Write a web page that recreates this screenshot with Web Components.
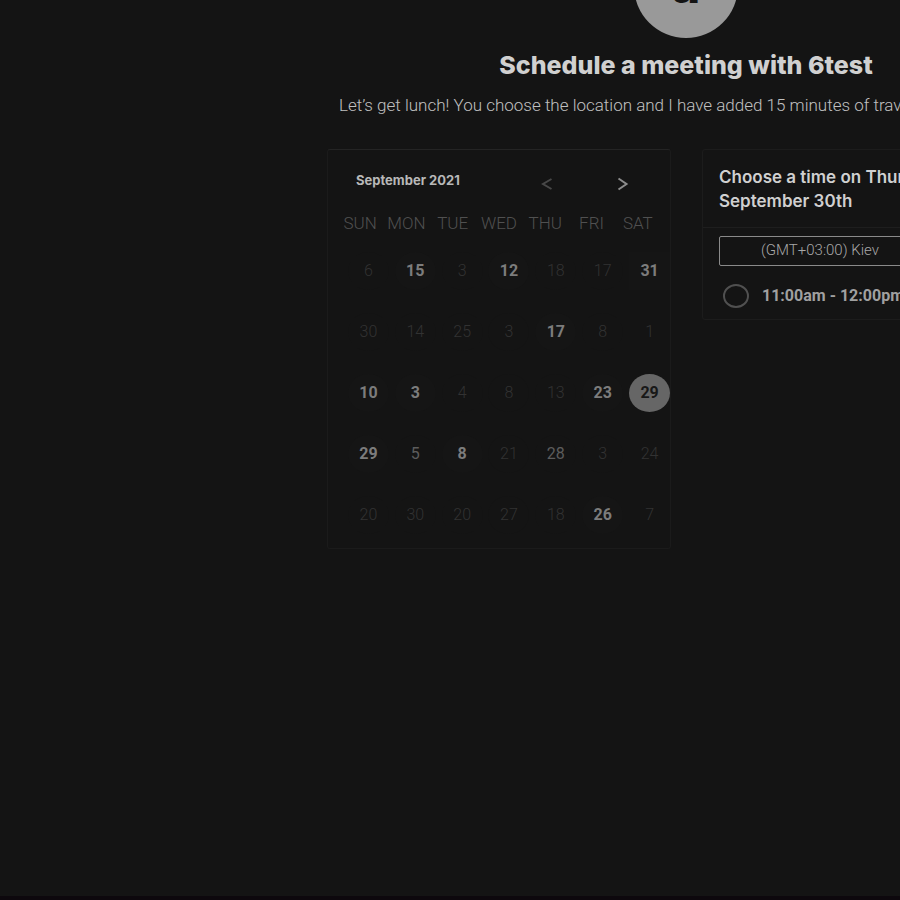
<!DOCTYPE html>
<html lang="en">
<head>
<meta charset="utf-8">
<title>Schedule a meeting with 6test</title>
<style>
html{height:100%;background:#141414}
body{margin:0;min-height:100%;display:flex;background:#141414;color:#d4d4d4;font-family:Roboto,"Liberation Sans",sans-serif;overflow:hidden}
booking-page{flex:1}
</style>
</head>
<body>
<booking-page></booking-page>
<script>
const define = (name, html, setup) => customElements.define(name, class extends HTMLElement {
  connectedCallback() {
    if (this.shadowRoot) return;
    this.attachShadow({mode: "open"}).innerHTML = html;
    if (setup) setup.call(this, this.shadowRoot);
  }
});

define("host-avatar", `<style>
:host{display:flex;justify-content:center;align-items:center;width:104px;height:104px;margin-top:-66px;border-radius:50%;background:#999;color:#141414;font:800 48px Inter,sans-serif}
span{line-height:56px}
</style><span><slot></slot></span>`);

define("day-cell", `<style>
:host{display:block}
button{display:block;width:41px;height:38px;margin:0 auto;padding:0;border:0;border-radius:50%;background:#141414;color:#323232;font:300 16px/38px Roboto,sans-serif}
:host([gap]) button{border-radius:0}
:host([kind=plain]) button{color:#5c5c5c;font-weight:400}
:host([kind=open]) button{background:#151515;color:#7c7c7c;font-weight:700}
:host([kind=chosen]) button{background:#666;color:#181818;font-weight:700;border-radius:50%}
</style><button type="button"><slot></slot></button>`);

define("month-calendar", `<style>
:host{display:block;box-sizing:border-box;border:1px solid #1b1b1b;border-top-color:#242424;border-radius:3px;padding:16px 0 14px}
header{display:flex;align-items:center;height:36px;padding:0 33px 0 28px}
h2{flex:1;margin:0;padding-bottom:8px;font:700 13px/18px Inter,sans-serif;color:#b8b8b8}
nav{display:flex;gap:48px}
button.step{display:grid;place-items:center;width:28px;height:28px;padding:0;border:0;background:none;color:#484848}
button.next{color:#8c8c8c}
svg{width:12px;height:14px;fill:none;stroke:currentColor;stroke-width:2}
.names,.days{display:grid;grid-template-columns:repeat(7,1fr)}
.names{padding:11px 9px 0;font-size:16px;line-height:20px;color:#444;text-align:center}
.names{font-size:17px;font-weight:300;color:#505050}
.days{margin:19px -3px 0 17px;row-gap:23px}
</style>
<header><h2>September 2021</h2><nav>
<button class="step" type="button" aria-label="Previous month"><svg viewBox="0 0 12 14"><path d="M10.500 2L2 7l8.500 5"/></svg></button>
<button class="step next" type="button" aria-label="Next month"><svg viewBox="0 0 12 14"><path d="M1.500 1.500L9.500 7l-8 5.500"/></svg></button>
</nav></header>
<div class="names"><span>SUN</span><span>MON</span><span>TUE</span><span>WED</span><span>THU</span><span>FRI</span><span>SAT</span></div>
<div class="days"></div>`, function (root) {
  const weeks = [
    "6 15* 3 12* 18 17 31*",
    "30 14 25 3 17* 8 1",
    "10* 3* 4 8 13 23* 29!",
    "29* 5+ 8* 21 28+ 3 24",
    "20 30 20 27 18 26* 7"
  ];
  const kinds = {"*": "open", "!": "chosen", "+": "plain"};
  for (const week of weeks) week.split(" ").forEach((day, i) => {
    const cell = document.createElement("day-cell");
    const kind = kinds[day.slice(-1)];
    if (kind) cell.setAttribute("kind", kind);
    if (i === 6) cell.setAttribute("gap", "");
    cell.textContent = parseInt(day, 10);
    root.querySelector(".days").append(cell);
  });
});

define("time-picker", `<style>
:host{display:block;box-sizing:border-box;border:1px solid #1c1c1c;border-radius:3px;color:#d0d0d0}
h2{margin:0;padding:15px 16px 14px;border-bottom:1px solid #1e1e1e;font:600 17px/24px Inter,sans-serif;white-space:nowrap}
.body{padding:8px 16px 10px}
select{appearance:none;display:block;box-sizing:border-box;width:100%;height:30px;margin:0;padding:0 41px 2px;border:1px solid #8a8a8a;border-radius:2px;background:#141414;color:#a8a8a8;font:300 15px/20px Roboto,sans-serif}
label{display:flex;align-items:center;gap:13px;margin-top:17px;padding-left:4px;font:700 16px/26px Roboto,sans-serif;color:#a0a0a0;white-space:nowrap}
input{appearance:none;box-sizing:border-box;width:26px;height:24px;margin:0;border:2px solid #505050;border-radius:50%}
</style>
<h2>Choose a time on Thursday,<br>September 30th</h2>
<div class="body">
<select aria-label="Time zone"><option>(GMT+03:00) Kiev</option></select>
<label><input type="radio" name="slot">11:00am - 12:00pm</label>
</div>`);

define("booking-page", `<style>
:host{display:flex;flex-direction:column;box-sizing:border-box;border-bottom:4px solid #0d080d;overflow:hidden}
main{display:flex;flex-direction:column;align-items:center;flex:1;min-width:718px;margin-left:327px;align-self:flex-start}
h1{margin:11px 0 0;font:800 25px/32px Inter,sans-serif;color:#d0d0d0}
p{margin:12px 0 0;align-self:flex-start;padding-left:12px;font-size:17px;font-weight:300;line-height:24px;color:#c0c0c0;white-space:nowrap}
.panels{display:grid;grid-template-columns:344px 1fr;gap:31px;align-items:start;align-self:stretch;margin-top:32px}
</style>
<main>
<host-avatar>a</host-avatar>
<h1>Schedule a meeting with 6test</h1>
<p>Let’s get lunch! You choose the location and I have added 15 minutes of travel time</p>
<div class="panels"><month-calendar></month-calendar><time-picker></time-picker></div>
</main>`);
</script>
</body>
</html>
